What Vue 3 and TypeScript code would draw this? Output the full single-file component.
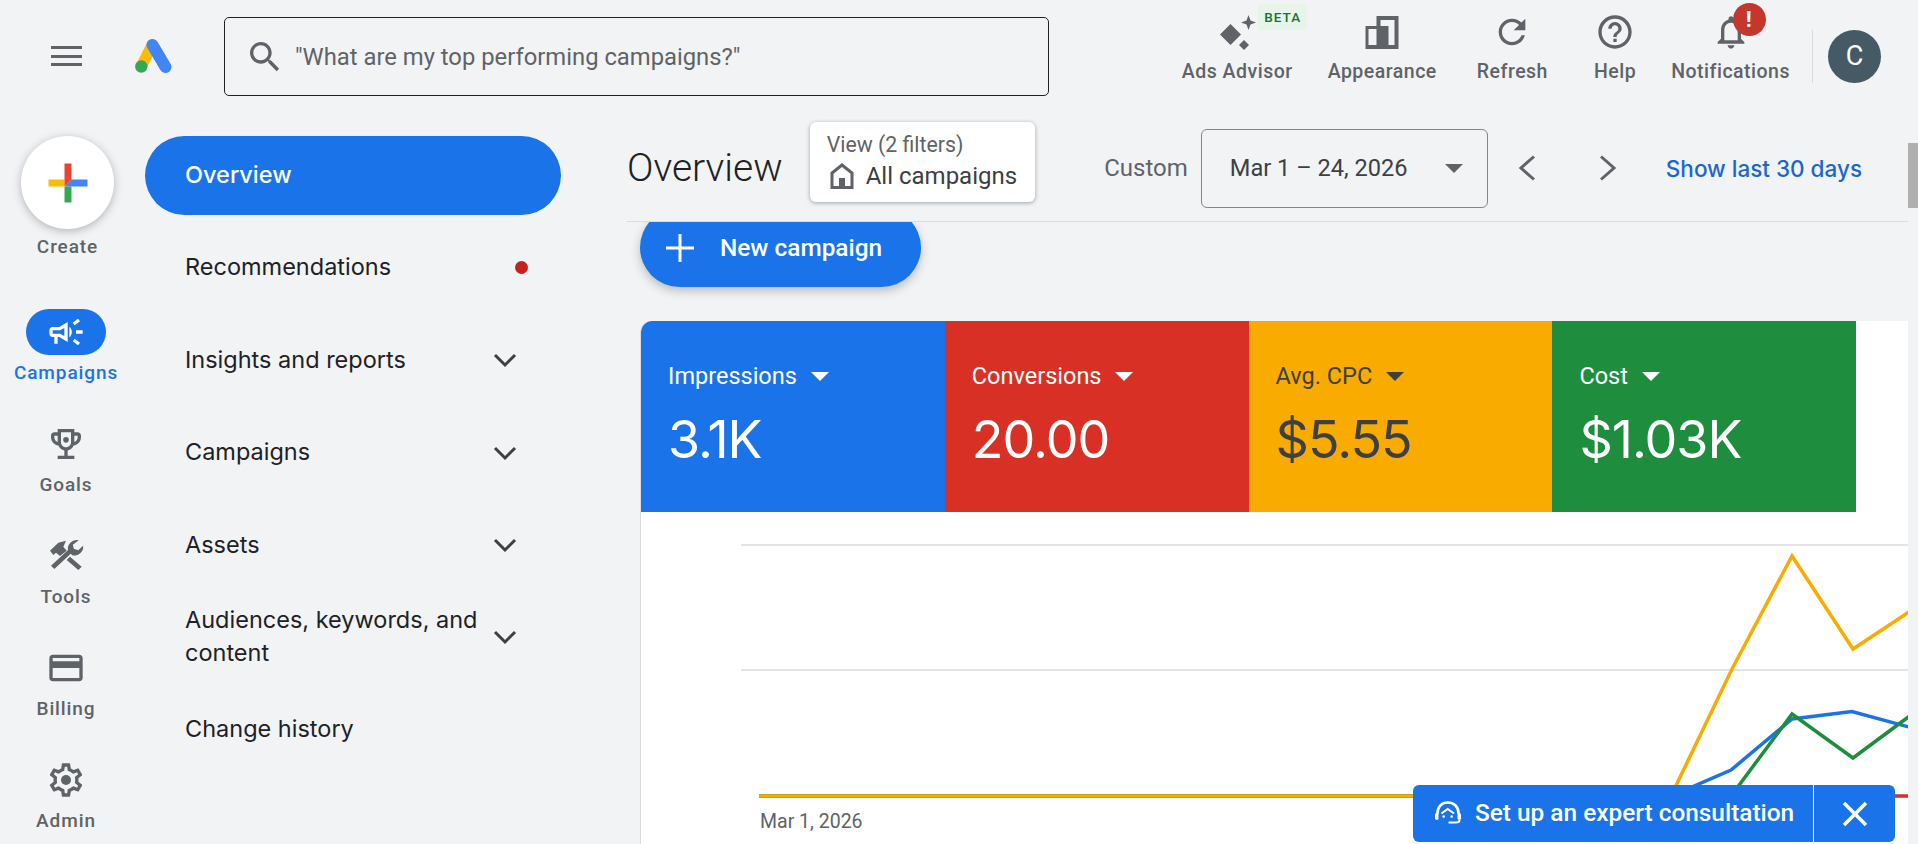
<script setup lang="ts">
interface RailItem {
  label: string
  paths: string[]
  active?: boolean
}

interface NavItem {
  label: string
  active?: boolean
  dot?: boolean
  expandable?: boolean
}

interface Metric {
  label: string
  value: string
  tone: string
}

const railItems: RailItem[] = [
  {
    label: 'Campaigns',
    active: true,
    paths: [
      'M18 11v2h4v-2h-4zm-2 6.61c.96.71 2.21 1.65 3.2 2.39.4-.53.8-1.07 1.2-1.6-.99-.74-2.24-1.68-3.2-2.4-.4.54-.8 1.08-1.2 1.61zM20.4 5.6c-.4-.53-.8-1.07-1.2-1.6-.99.74-2.24 1.68-3.2 2.4.4.53.8 1.07 1.2 1.6.96-.72 2.21-1.65 3.2-2.4zM4 9c-1.1 0-2 .9-2 2v2c0 1.1.9 2 2 2h1v4h2v-4h1l5 3V6L8 9H4zm5.03 1.71L11 9.53v4.94l-1.97-1.18-.48-.29H4v-2h4.55l.48-.29zM15.5 12c0-1.33-.58-2.53-1.5-3.35v6.69c.92-.81 1.5-2.01 1.5-3.34z',
    ],
  },
  {
    label: 'Goals',
    paths: [
      'M19 5h-2V3H7v2H5c-1.1 0-2 .9-2 2v1c0 2.55 1.92 4.63 4.39 4.94.63 1.5 1.98 2.63 3.61 2.96V19H7v2h10v-2h-4v-3.1c1.63-.33 2.98-1.46 3.61-2.96C19.08 12.63 21 10.55 21 8V7c0-1.1-.9-2-2-2zM5 8V7h2v3.82C5.84 10.4 5 9.3 5 8zm7 6c-1.65 0-3-1.35-3-3V5h6v6c0 1.65-1.35 3-3 3zm7-6c0 1.3-.84 2.4-2 2.82V7h2v1z',
      'M12 7.8a1.7 1.7 0 1 0 0 3.4 1.7 1.7 0 0 0 0-3.4z',
    ],
  },
  {
    label: 'Tools',
    paths: [
      // wrench
      'M3 17.8 L13.9 7.8 L15.8 9.8 L5 19.8z',
      'M19.7 2.6a5.2 5.2 0 0 0-6.3 6.6l2.4 2.3a5.2 5.2 0 0 0 6.5-5.6l-3 2.6-2.6-.8-.6-2.500z',
      // hammer
      'M14.4 12.4 L21.4 18.4 L19.4 20.4 L12.4 14.4z',
      'M2.4 8.8 L7.4 4 L12 2.8 L10.4 6.4 L12.4 8.8 L8.4 12 L6 10 L4.4 11.4z',
    ],
  },
  {
    label: 'Billing',
    paths: [
      'M20 4H4c-1.11 0-1.99.89-1.99 2L2 18c0 1.11.89 2 2 2h16c1.11 0 2-.89 2-2V6c0-1.11-.89-2-2-2zm0 14H4v-6h16v6zm0-10H4V6h16v2z',
    ],
  },
  {
    label: 'Admin',
    paths: [
      'M19.43 12.98c.04-.32.07-.64.07-.98 0-.34-.03-.66-.07-.98l2.11-1.65c.19-.15.24-.42.12-.64l-2-3.46c-.09-.16-.26-.25-.44-.25-.06 0-.12.01-.17.03l-2.49 1c-.52-.4-1.08-.73-1.69-.98l-.38-2.65C14.46 2.18 14.25 2 14 2h-4c-.25 0-.46.18-.49.42l-.38 2.65c-.61.25-1.17.59-1.69.98l-2.49-1c-.06-.02-.12-.03-.18-.03-.17 0-.34.09-.43.25l-2 3.46c-.13.22-.07.49.12.64l2.11 1.65c-.04.32-.07.65-.07.98 0 .33.03.66.07.98l-2.11 1.65c-.19.15-.24.42-.12.64l2 3.46c.09.16.26.25.44.25.06 0 .12-.01.17-.03l2.49-1c.52.4 1.08.73 1.69.98l.38 2.65c.03.24.24.42.49.42h4c.25 0 .46-.18.49-.42l.38-2.65c.61-.25 1.17-.59 1.69-.98l2.49 1c.06.02.12.03.18.03.17 0 .34-.09.43-.25l2-3.46c.12-.22.07-.49-.12-.64l-2.11-1.65zm-1.98-1.71c.04.31.05.52.05.73 0 .21-.02.43-.05.73l-.14 1.13.89.7 1.08.84-.7 1.21-1.27-.51-1.04-.42-.9.68c-.43.32-.84.56-1.25.73l-1.06.43-.16 1.13-.2 1.35h-1.4l-.19-1.35-.16-1.13-1.06-.43c-.43-.18-.83-.41-1.23-.71l-.91-.7-1.06.43-1.27.51-.7-1.21 1.08-.84.89-.7-.14-1.13c-.03-.31-.05-.54-.05-.74s.02-.43.05-.73l.14-1.13-.89-.7-1.08-.84.7-1.21 1.27.51 1.04.42.9-.68c.43-.32.84-.56 1.25-.73l1.06-.43.16-1.13.2-1.35h1.39l.19 1.35.16 1.13 1.06.43c.43.18.83.41 1.23.71l.91.7 1.06-.43 1.27-.51.7 1.21-1.07.85-.89.7.14 1.13z',
      'M12 9a3 3 0 1 0 0 6 3 3 0 0 0 0-6z',
    ],
  },
]

const navItems: NavItem[] = [
  { label: 'Overview', active: true },
  { label: 'Recommendations', dot: true },
  { label: 'Insights and reports', expandable: true },
  { label: 'Campaigns', expandable: true },
  { label: 'Assets', expandable: true },
  { label: 'Audiences, keywords, and content', expandable: true },
  { label: 'Change history' },
]

const metrics: Metric[] = [
  { label: 'Impressions', value: '3.1K', tone: 'blue' },
  { label: 'Conversions', value: '20.00', tone: 'red' },
  { label: 'Avg. CPC', value: '$5.55', tone: 'orange' },
  { label: 'Cost', value: '$1.03K', tone: 'green' },
]

const series = [
  { color: '#d93025', points: '118,284 1268,284' },
  { color: '#1a73e8', points: '118,284 1030,284 1090,258 1151,207 1211,199.5 1268,215' },
  { color: '#1e8e3e', points: '118,284 1090,284 1151,202 1212,246 1268,204.5' },
  { color: '#f9ab00', points: '118,284 1030,284 1091,157 1151,44 1212,137 1268,100' },
]
</script>

<template>
  <div class="page">
    <header class="topbar">
      <button class="menu" aria-label="Menu">
        <span></span><span></span><span></span>
      </button>
      <svg class="logo" viewBox="0 0 37 34" width="37" height="34">
        <path d="M17 6 L6.5 27" stroke="#fbbc04" stroke-width="11" stroke-linecap="round" fill="none" />
        <path d="M17.5 6 L30.5 28" stroke="#4285f4" stroke-width="12" stroke-linecap="round" fill="none" />
        <circle cx="6.3" cy="27.5" r="6.2" fill="#34a853" />
      </svg>
      <div class="search">
        <svg viewBox="0 0 24 24" width="40" height="40" fill="#5f6368">
          <path d="M15.5 14h-.79l-.28-.27C15.41 12.59 16 11.11 16 9.5 16 5.91 13.09 3 9.5 3S3 5.91 3 9.5 5.91 16 9.5 16c1.61 0 3.09-.59 4.23-1.57l.27.28v.79l5 4.99L20.49 19l-4.99-5zm-6 0C7.01 14 5 11.99 5 9.5S7.01 5 9.5 5 14 7.01 14 9.5 11.99 14 9.5 14z" />
        </svg>
        <span>"What are my top performing campaigns?"</span>
      </div>

      <div class="tools">
        <div class="tool">
          <span class="tool-icon">
            <svg viewBox="0 0 40 40" width="40" height="40" fill="#5f6368">
              <path d="M13.500 12 L24 22.500 L13.500 33 L3 22.500z" />
              <path d="M31.500 3 L33.500 8.500 L39 10.500 L33.500 12.500 L31.500 18 L29.500 12.500 L24 10.500 L29.500 8.500z" />
              <path d="M27 28 L32 33 L27 38 L22 33z" />
            </svg>
            <span class="beta">BETA</span>
          </span>
          <span>Ads Advisor</span>
        </div>
        <div class="tool tool-appearance">
          <span class="tool-icon">
            <svg viewBox="0 0 40 40" width="40" height="40" fill="#5f6368">
              <path fill-rule="evenodd" d="M3.500 14 H14.500 V4 H36.500 V37 H3.500z M6.500 17 V33 H14.500 V17z M18.500 8 V14 H26.500 V33 H32.500 V8z" />
            </svg>
          </span>
          <span>Appearance</span>
        </div>
        <div class="tool tool-refresh">
          <span class="tool-icon">
            <svg viewBox="0 0 24 24" width="40" height="40" fill="#5f6368">
              <path d="M17.65 6.35C16.2 4.9 14.21 4 12 4c-4.42 0-7.99 3.58-7.99 8s3.57 8 7.99 8c3.73 0 6.84-2.55 7.73-6h-2.08c-.82 2.33-3.04 4-5.65 4-3.31 0-6-2.69-6-6s2.69-6 6-6c1.66 0 3.14.69 4.22 1.78L13 11h7V4l-2.35 2.35z" />
            </svg>
          </span>
          <span>Refresh</span>
        </div>
        <div class="tool tool-help">
          <span class="tool-icon">
            <svg viewBox="0 0 24 24" width="40" height="40" fill="#5f6368">
              <path d="M11 18h2v-2h-2v2zm1-16C6.48 2 2 6.48 2 12s4.48 10 10 10 10-4.48 10-10S17.52 2 12 2zm0 18c-4.41 0-8-3.59-8-8s3.59-8 8-8 8 3.59 8 8-3.59 8-8 8zm0-14c-2.21 0-4 1.79-4 4h2c0-1.1.9-2 2-2s2 .9 2 2c0 2-3 1.75-3 5h2c0-2.25 3-2.5 3-5 0-2.21-1.79-4-4-4z" />
            </svg>
          </span>
          <span>Help</span>
        </div>
        <div class="tool tool-notif">
          <span class="tool-icon">
            <svg viewBox="0 0 24 24" width="40" height="40" fill="#5f6368">
              <path d="M12 22c1.1 0 2-.9 2-2h-4c0 1.1.9 2 2 2zm6-6v-5c0-3.07-1.63-5.64-4.5-6.32V4c0-.83-.67-1.5-1.5-1.5s-1.5.67-1.5 1.5v.68C7.64 5.36 6 7.92 6 11v5l-2 2v1h16v-1l-2-2zm-2 1H8v-6c0-2.48 1.51-4.5 4-4.5s4 2.02 4 4.5v6z" />
            </svg>
            <span class="alert">!</span>
          </span>
          <span>Notifications</span>
        </div>
        <div class="divider"></div>
        <div class="avatar">C</div>
      </div>
    </header>

    <div class="body">
      <aside class="rail">
        <div class="create">
          <div class="create-btn">
            <svg viewBox="0 0 40 40" width="40" height="40">
              <path d="M0.500 16.500 H16.500 V23.500 H0.500z" fill="#fbbc04" />
              <path d="M16.500 23.500 H23.500 V39.500 H16.500z" fill="#34a853" />
              <path d="M23.500 16.500 H39.500 V23.500 H16.500z" fill="#4285f4" />
              <path d="M16.500 0.500 H23.500 V16.500 L16.500 23.500z" fill="#ea4335" />
            </svg>
          </div>
          <span>Create</span>
        </div>
        <div v-for="item in railItems" :key="item.label" class="rail-item" :class="{ active: item.active }">
          <span class="rail-pill">
            <svg viewBox="0 0 24 24" width="40" height="40">
              <path v-for="d in item.paths" :key="d" :d="d" />
            </svg>
          </span>
          <span>{{ item.label }}</span>
        </div>
      </aside>

      <nav class="nav">
        <div v-for="item in navItems" :key="item.label" class="nav-item" :class="{ active: item.active }">
          <span class="nav-label">{{ item.label }}</span>
          <span v-if="item.dot" class="nav-dot"></span>
          <svg v-if="item.expandable" class="nav-chevron" viewBox="0 0 24 16" width="24" height="16" fill="none" stroke="#3c4043" stroke-width="3">
            <path d="M2 3 L12 13 L22 3" />
          </svg>
        </div>
      </nav>

      <main class="main">
        <div class="scroll-thumb"></div>
        <div class="head">
          <h1>Overview</h1>
          <div class="view-card">
            <span class="view-title">View (2 filters)</span>
            <span class="view-value">
              <svg viewBox="0 0 24 26" width="24" height="26" fill="none" stroke="#5f6368" stroke-width="3">
                <path d="M2 24.500 V10 L12 2 L22 10 V24.500z" />
                <path d="M9 24 V15 H15 V24z" fill="#5f6368" stroke="none" />
              </svg>
              All campaigns
            </span>
          </div>
          <div class="range">
            <span class="custom">Custom</span>
            <div class="date-box">
              <span>Mar 1 – 24, 2026</span>
              <i class="caret"></i>
            </div>
            <svg class="pager" viewBox="0 0 18 26" width="18" height="26" fill="none" stroke="#5f6368" stroke-width="3">
              <path d="M16 1.500 L3 13 L16 24.500" />
            </svg>
            <svg class="pager pager-next" viewBox="0 0 18 26" width="18" height="26" fill="none" stroke="#5f6368" stroke-width="3">
              <path d="M2 1.500 L15 13 L2 24.500" />
            </svg>
            <a class="last-30">Show last 30 days</a>
          </div>
        </div>

        <div class="content">
          <button class="new-campaign">
            <svg viewBox="0 0 28 28" width="28" height="28" stroke="#fff" stroke-width="3">
              <path d="M14 0 V28 M0 14 H28" />
            </svg>
            New campaign
          </button>

          <section class="card">
            <div class="metrics">
              <div v-for="m in metrics" :key="m.label" class="metric" :class="m.tone">
                <div class="metric-label">{{ m.label }} <i class="caret"></i></div>
                <div class="metric-value">{{ m.value }}</div>
              </div>
            </div>
            <svg class="chart" viewBox="0 0 1268 332" width="1268" height="332">
              <line x1="100" y1="33" x2="1268" y2="33" stroke="#e3e4e6" stroke-width="2" />
              <line x1="100" y1="158" x2="1268" y2="158" stroke="#e3e4e6" stroke-width="2" />
              <polyline v-for="s in series" :key="s.color" :points="s.points" :stroke="s.color" stroke-width="3.500" fill="none" />
              <text x="119" y="316" class="axis-label">Mar 1, 2026</text>
            </svg>
          </section>
        </div>
      </main>
    </div>

    <div class="consult">
      <div class="consult-main">
        <svg viewBox="0 0 26 26" width="26" height="26" fill="none" stroke="#fff" stroke-width="2.600">
          <path d="M2.500 13 V12 C2.500 5.500 7 1.500 12.700 1.500 C18.500 1.500 23.500 5.500 23.500 12 V13" />
          <path d="M24.500 19 C24.500 21.500 23 21.500 21 21.500 H13.500" stroke-width="2" />
          <path d="M6.500 12.500 L12.700 8 L19 12.500" stroke-width="2" />
          <rect x="0" y="12" width="3.500" height="7" rx="1.700" fill="#fff" stroke="none" />
          <rect x="22.500" y="12" width="3.500" height="7" rx="1.700" fill="#fff" stroke="none" />
          <circle cx="8.700" cy="15.500" r="1.300" fill="#fff" stroke="none" />
          <circle cx="16.700" cy="15.500" r="1.300" fill="#fff" stroke="none" />
        </svg>
        <span class="consult-text">Set up an expert consultation</span>
      </div>
      <div class="consult-close">
        <svg viewBox="0 0 26 26" width="26" height="26" stroke="#fff" stroke-width="3.500">
          <path d="M2 2 L24 24 M24 2 L2 24" />
        </svg>
      </div>
    </div>
  </div>
</template>

<style>
html,
body {
  margin: 0;
  background: #f1f3f5;
}
</style>

<style scoped>
.page {
  position: relative;
  width: 1918px;
  height: 844px;
  overflow: hidden;
  background: #f1f3f5;
  font-family: Roboto, sans-serif;
  color: #3c4043;
}

.topbar {
  display: flex;
  align-items: flex-start;
  height: 111px;
}

.menu {
  display: flex;
  flex-direction: column;
  justify-content: space-between;
  width: 31px;
  height: 20px;
  margin: 46px 0 0 51px;
  padding: 0;
  border: 0;
  background: none;
}

.menu span {
  display: block;
  height: 3px;
  background: #5f6368;
}

.logo {
  margin: 39px 0 0 53px;
}

.search {
  display: flex;
  align-items: center;
  gap: 10px;
  box-sizing: border-box;
  width: 825px;
  height: 79px;
  margin: 17px 0 0 52px;
  padding-left: 20px;
  border: 1px solid #202124;
  border-radius: 5px;
  font-size: 23.800px;
  color: #5f6368;
}

.tools {
  display: flex;
  align-items: flex-start;
  gap: 33px;
  margin-left: auto;
  padding-right: 37px;
}

.tool {
  display: flex;
  flex-direction: column;
  align-items: center;
  margin-top: 12px;
  font-size: 19.500px;
  font-weight: 500;
  letter-spacing: 0.5px;
  line-height: 34px;
  color: #5f6368;
}

.tool-icon {
  position: relative;
  display: block;
  height: 40px;
  margin-bottom: 3px;
}

.tool-appearance {
  margin-left: 2px;
}

.tool-refresh {
  margin-left: 7px;
}

.tool-help {
  margin-left: 13px;
}

.tool-notif {
  margin-left: 2px;
}

.beta {
  position: absolute;
  top: -8px;
  left: 41px;
  width: 49px;
  height: 26px;
  border-radius: 4px;
  background: #e6f4ea;
  color: #137333;
  font-size: 13.500px;
  line-height: 26px;
  letter-spacing: 1px;
  text-align: center;
}

.alert {
  position: absolute;
  top: -9px;
  left: 22px;
  width: 33px;
  height: 33px;
  border-radius: 50%;
  background: #c5372c;
  color: #fff;
  font-size: 22px;
  font-weight: 700;
  line-height: 33px;
  text-align: center;
}

.divider {
  width: 1px;
  height: 53px;
  margin: 30px -18px 0 -11px;
  background: #dadce0;
}

.avatar {
  width: 53px;
  height: 53px;
  margin-top: 30px;
  border-radius: 50%;
  background: #455a64;
  color: #fff;
  font-size: 27px;
  line-height: 53px;
  text-align: center;
}

.body {
  display: flex;
  height: 733px;
}

.rail {
  flex: none;
  width: 132px;
  padding-top: 25px;
  font-size: 19px;
  font-weight: 500;
  letter-spacing: 0.9px;
  color: #5f6368;
  text-align: center;
}

.create {
  display: flex;
  flex-direction: column;
  align-items: center;
  box-sizing: border-box;
  height: 173px;
  padding-left: 3px;
}

.create-btn {
  display: flex;
  align-items: center;
  justify-content: center;
  width: 93px;
  height: 93px;
  border-radius: 50%;
  background: #fff;
  box-shadow: 0 2px 8px rgba(60, 64, 67, 0.35);
}

.create span {
  margin-top: 1px;
  line-height: 34px;
}

.rail-item {
  display: flex;
  flex-direction: column;
  align-items: center;
  height: 112px;
  line-height: 36px;
}

.rail-pill {
  display: flex;
  align-items: center;
  justify-content: center;
  width: 80px;
  height: 46px;
  border-radius: 23px;
  fill: #5f6368;
}

.rail-item.active {
  color: #1a73e8;
}

.rail-item.active .rail-pill {
  background: #1a73e8;
  fill: #fff;
}

.nav {
  display: flex;
  flex-direction: column;
  gap: 13.4px;
  flex: none;
  box-sizing: border-box;
  width: 416px;
  margin-left: 13px;
  padding-top: 25px;
}

.nav-item {
  display: flex;
  align-items: center;
  box-sizing: border-box;
  height: 79px;
  padding: 0 44px 0 40px;
  border-radius: 40px;
  font-family: Inter, sans-serif;
  font-size: 23.500px;
  line-height: 33px;
  color: #202124;
}

.nav-item.active {
  background: #1a73e8;
  color: #fff;
  font-weight: 500;
}

.nav-label {
  flex: 1;
  max-width: 300px;
  margin-top: -2px;
}

.nav-dot {
  width: 13px;
  height: 13px;
  margin-left: auto;
  margin-right: -11px;
  border-radius: 50%;
  background: #c5221f;
}

.nav-chevron {
  margin-left: auto;
}

.main {
  position: relative;
  flex: 1;
  min-width: 0;
  margin: 0 10px 0 66px;
  display: flex;
  flex-direction: column;
}

.scroll-thumb {
  position: absolute;
  top: 32px;
  right: -10px;
  width: 10px;
  height: 65px;
  background: #b0b0b0;
}

.head {
  display: flex;
  align-items: center;
  flex: none;
  box-sizing: border-box;
  height: 111px;
  padding: 4px 46px 0 0;
  border-bottom: 1px solid #dadce0;
}

.head h1 {
  margin: 0;
  font-size: 39px;
  font-weight: 300;
  color: #202124;
}

.view-card {
  display: flex;
  flex-direction: column;
  align-self: flex-start;
  box-sizing: border-box;
  width: 225px;
  height: 80px;
  margin: 7px 0 0 27px;
  padding: 9px 17px;
  border-radius: 6px;
  background: #fff;
  box-shadow: 0 1px 4px rgba(60, 64, 67, 0.45);
}

.view-title {
  font-size: 21.300px;
  line-height: 28px;
  color: #5f6368;
}

.view-value {
  display: flex;
  align-items: center;
  gap: 12px;
  margin-left: 3px;
  font-size: 24px;
  line-height: 34px;
  color: #3c4043;
}

.range {
  display: flex;
  align-items: center;
  margin-left: auto;
}

.custom {
  margin-right: 13px;
  font-size: 24px;
  color: #5f6368;
}

.date-box {
  display: flex;
  align-items: center;
  justify-content: space-between;
  box-sizing: border-box;
  width: 287px;
  height: 79px;
  padding: 0 24px 0 28px;
  border: 1px solid #80868b;
  border-radius: 6px;
  font-size: 23.600px;
}

.caret {
  display: inline-block;
  width: 0;
  height: 0;
  border-left: 9px solid transparent;
  border-right: 9px solid transparent;
  border-top: 9px solid currentColor;
  vertical-align: middle;
}

.date-box .caret {
  color: #5f6368;
}

.pager {
  margin-left: 30px;
}

.pager-next {
  margin-left: 63px;
}

.last-30 {
  margin-left: 49px;
  font-size: 22.500px;
  font-family: Inter, sans-serif;
  font-weight: 500;
  color: #1967d2;
}

.content {
  flex: 1;
  min-height: 0;
  overflow: hidden;
  padding-left: 13px;
}

.new-campaign {
  display: flex;
  align-items: center;
  gap: 26px;
  width: 281px;
  height: 79px;
  margin-top: -14px;
  padding: 0 0 0 26px;
  border: 0;
  border-radius: 40px;
  background: #1a73e8;
  box-shadow: 0 4px 10px rgba(60, 64, 67, 0.3);
  color: #fff;
  font-family: Roboto, sans-serif;
  font-size: 24.400px;
  font-weight: 500;
}

.card {
  margin-top: 34px;
  border-left: 1px solid #dadce0;
  border-top-left-radius: 12px;
  background: #fff;
  overflow: hidden;
}

.metrics {
  display: flex;
}

.metric {
  box-sizing: border-box;
  width: 303.800px;
  height: 191px;
  padding: 40px 0 0 27px;
  color: #fff;
}

.metric.blue {
  background: #1a73e8;
}

.metric.red {
  background: #d93025;
}

.metric.orange {
  background: #f9ab00;
  color: #3c4043;
}

.metric.green {
  background: #1e8e3e;
}

.metric-label {
  font-size: 23.500px;
  line-height: 30px;
}

.metric-label .caret {
  margin: -2px 0 0 8px;
}

.metric-value {
  margin-top: 16px;
  font-family: Inter, sans-serif;
  font-size: 52px;
  letter-spacing: -1px;
  line-height: 66px;
}

.chart {
  display: block;
}

.axis-label {
  font-family: Roboto, sans-serif;
  font-size: 19.500px;
  fill: #5f6368;
}

.consult {
  position: absolute;
  left: 1413px;
  bottom: 2px;
  display: flex;
  width: 482px;
  height: 57px;
  border-radius: 6px;
  background: #1a73e8;
  color: #fff;
}

.consult-main {
  display: flex;
  align-items: center;
  gap: 14px;
  box-sizing: border-box;
  width: 401px;
  padding-left: 22px;
  border-right: 1px solid #fff;
  font-size: 24.400px;
  font-weight: 500;
}

.consult-text {
  margin-top: -2px;
}

.consult-close {
  display: flex;
  flex: 1;
  align-items: center;
  justify-content: center;
}
</style>
